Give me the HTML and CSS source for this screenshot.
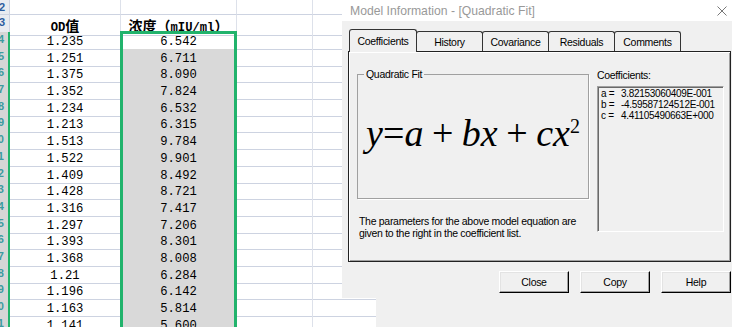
FILE: index.html
```html
<!DOCTYPE html>
<html lang="zh-CN">

<head>
    <meta charset="UTF-8">
    <title>Model Information - [Quadratic Fit]</title>
    <link rel="stylesheet" href="styles.css">
</head>

<body>
    <!-- spreadsheet behind the dialog -->
    <div class="sheet">
        <div class="row row-top"><div class="rh"><span>2</span></div><div class="c"></div><div class="c"></div><div class="c"></div><div class="c"></div></div>
        <div class="row row-head"><div class="rh"><span>3</span></div><div class="c hd">OD<span class="cjk">值</span></div><div class="c hd"><span class="cjk">浓度（</span>mIU/ml<span class="cjk">）</span></div><div class="c"></div><div class="c"></div></div>
        <div class="row sel-row"><div class="rh"><span>4</span></div><div class="c">1.235</div><div class="c">6.542</div><div class="c"></div><div class="c"></div></div>
        <div class="row sel-row"><div class="rh"><span>5</span></div><div class="c">1.251</div><div class="c picked">6.711</div><div class="c"></div><div class="c"></div></div>
        <div class="row sel-row"><div class="rh"><span>6</span></div><div class="c">1.375</div><div class="c picked">8.090</div><div class="c"></div><div class="c"></div></div>
        <div class="row sel-row"><div class="rh"><span>7</span></div><div class="c">1.352</div><div class="c picked">7.824</div><div class="c"></div><div class="c"></div></div>
        <div class="row sel-row"><div class="rh"><span>8</span></div><div class="c">1.234</div><div class="c picked">6.532</div><div class="c"></div><div class="c"></div></div>
        <div class="row sel-row"><div class="rh"><span>9</span></div><div class="c">1.213</div><div class="c picked">6.315</div><div class="c"></div><div class="c"></div></div>
        <div class="row sel-row"><div class="rh"><span>10</span></div><div class="c">1.513</div><div class="c picked">9.784</div><div class="c"></div><div class="c"></div></div>
        <div class="row sel-row"><div class="rh"><span>11</span></div><div class="c">1.522</div><div class="c picked">9.901</div><div class="c"></div><div class="c"></div></div>
        <div class="row sel-row"><div class="rh"><span>12</span></div><div class="c">1.409</div><div class="c picked">8.492</div><div class="c"></div><div class="c"></div></div>
        <div class="row sel-row"><div class="rh"><span>13</span></div><div class="c">1.428</div><div class="c picked">8.721</div><div class="c"></div><div class="c"></div></div>
        <div class="row sel-row"><div class="rh"><span>14</span></div><div class="c">1.316</div><div class="c picked">7.417</div><div class="c"></div><div class="c"></div></div>
        <div class="row sel-row"><div class="rh"><span>15</span></div><div class="c">1.297</div><div class="c picked">7.206</div><div class="c"></div><div class="c"></div></div>
        <div class="row sel-row"><div class="rh"><span>16</span></div><div class="c">1.393</div><div class="c picked">8.301</div><div class="c"></div><div class="c"></div></div>
        <div class="row sel-row"><div class="rh"><span>17</span></div><div class="c">1.368</div><div class="c picked">8.008</div><div class="c"></div><div class="c"></div></div>
        <div class="row sel-row"><div class="rh"><span>18</span></div><div class="c">1.21</div><div class="c picked">6.284</div><div class="c"></div><div class="c"></div></div>
        <div class="row sel-row"><div class="rh"><span>19</span></div><div class="c">1.196</div><div class="c picked">6.142</div><div class="c"></div><div class="c"></div></div>
        <div class="row sel-row"><div class="rh"><span>20</span></div><div class="c">1.163</div><div class="c picked">5.814</div><div class="c"></div><div class="c"></div></div>
        <div class="row sel-row"><div class="rh"><span>21</span></div><div class="c">1.141</div><div class="c picked">5.600</div><div class="c"></div><div class="c"></div></div>
    </div>
    <div class="selection"></div>

    <!-- model information dialog -->
    <div class="dialog">
        <div class="titlebar">
            <span>Model Information - [Quadratic Fit]</span>
            <svg class="close-x" viewBox="0 0 10 10" width="10" height="10"><path d="M0.5 0.5L9.5 9.5M9.5 0.5L0.5 9.5" stroke="#777" stroke-width="1" fill="none"/></svg>
        </div>
        <div class="dlg-body">
            <div class="tabs">
                <div class="tab on">Coefficients</div>
                <div class="tab">History</div>
                <div class="tab">Covariance</div>
                <div class="tab">Residuals</div>
                <div class="tab">Comments</div>
            </div>
            <div class="pane">
                <div class="fit">
                    <fieldset class="group">
                        <legend>Quadratic Fit</legend>
                        <div class="formula"><i>y</i>=<i>a</i> + <i>bx</i> + <i>cx</i><sup>2</sup></div>
                    </fieldset>
                    <p class="note">The parameters for the above model equation are<br>given to the right in the coefficient list.</p>
                </div>
                <div class="coefs">
                    <div class="coef-label">Coefficients:</div>
                    <div class="coef-box">
                        <div><span class="k">a =</span>3.82153060409E-001</div>
                        <div><span class="k">b =</span>-4.59587124512E-001</div>
                        <div><span class="k">c =</span>4.41105490663E+000</div>
                    </div>
                </div>
            </div>
            <div class="buttons">
                <button>Close</button>
                <button>Copy</button>
                <button>Help</button>
            </div>
        </div>
    </div>
    <div class="dialog-tail"></div>
</body>

</html>
```

FILE: styles.css
```css
* {
    box-sizing: border-box;
}

body {
    margin: 0;
    width: 732px;
    height: 327px;
    overflow: hidden;
    position: relative;
    background: #fff;
    font-family: "Liberation Sans", Arial, sans-serif;
}

/* spreadsheet */

.row {
    display: grid;
    grid-template-columns: 10px 111px 116px 76px 1fr;
    height: 16.7px;
}

.row-top {
    height: 15px;
}

.row-head {
    height: 17px;
}

.c {
    border-right: 1px solid #dde1ea;
    border-bottom: 1px solid #cdd3e1;
    font-family: "Liberation Mono", monospace;
    font-size: 12.2px;
    line-height: 14px;
    padding-top: 3px;
    text-align: center;
    white-space: nowrap;
}

.c.picked {
    background: #d9d9d9;
    border-bottom-color: #b9bfcc;
}

.hd {
    font-weight: bold;
}

.cjk {
    font-family: "Noto Sans CJK SC", sans-serif;
    font-size: 14px;
    line-height: 14px;
}

.rh {
    display: flex;
    justify-content: flex-end;
    overflow: hidden;
    background: #e9ebf0;
    border-right: 1px solid #cdd3e1;
    border-bottom: 1px solid #cdd3e1;
    font-size: 11px;
    line-height: 15px;
    font-weight: bold;
    color: #2b5c9e;
}

.rh span {
    margin-right: 4px;
}

.sel-row .rh {
    background: #d6d6d6;
    border-right: 2px solid #21b36c;
    color: #3c9aa0;
}

.selection {
    position: absolute;
    left: 120px;
    top: 31px;
    width: 117px;
    height: 310px;
    border: 3px solid #21b36c;
}

/* dialog */

.dialog {
    position: absolute;
    left: 342px;
    top: 0;
    width: 390px;
    height: 298px;
    background: #f0f0f0;
    font-size: 10.5px;
    letter-spacing: -0.3px;
    color: #000;
}

.titlebar {
    height: 21px;
    background: #fff;
    display: flex;
    align-items: center;
    justify-content: space-between;
    padding: 0 5px 0 8px;
    font-size: 12.2px;
    letter-spacing: 0;
    color: #999;
}

.dlg-body {
    padding: 8px 1px 0 6px;
}

.tabs {
    display: flex;
    align-items: flex-end;
    height: 22px;
    padding-left: 1px;
}

.tab {
    width: 67px;
    height: 20px;
    margin-left: -1px;
    border: 1px solid #333;
    border-bottom: none;
    border-radius: 3px 3px 0 0;
    display: flex;
    align-items: center;
    justify-content: center;
}

.tab.on {
    width: 68px;
    height: 23px;
    margin-left: 0;
    margin-bottom: -1px;
    position: relative;
    z-index: 1;
    background: #f0f0f0;
}

.pane {
    height: 211px;
    border: 1px solid #222;
    box-shadow: inset 1px 1px #fff, inset -1px -1px #a0a0a0;
    padding: 0 6px 0 8px;
    display: flex;
    gap: 8px;
}

.fit {
    width: 232px;
}

.group {
    margin: 16px 0 0;
    padding: 0;
    height: 131px;
    border: 1px solid #a0a0a0;
    box-shadow: 1px 1px 0 #fff;
}

.group legend {
    margin-left: 6px;
    padding: 0 2px;
    line-height: 12px;
}

.formula {
    font-family: "Liberation Serif", serif;
    font-size: 38px;
    line-height: 38px;
    letter-spacing: 0;
    word-spacing: -1px;
    text-align: center;
    padding-top: 34px;
}

.formula sup {
    font-size: 20px;
    line-height: 0;
    vertical-align: 13px;
}

.note {
    margin: 16px 0 0 2px;
    line-height: 12px;
}

.coefs {
    width: 127px;
}

.coef-label {
    margin-top: 17px;
    line-height: 12px;
}

.coef-box {
    margin-top: 5px;
    height: 146px;
    border: 1px solid;
    border-color: #a0a0a0 #fff #fff #a0a0a0;
    box-shadow: inset 1px 1px #696969;
    padding: 1px 3px;
    font-size: 10px;
    line-height: 11.2px;
}

.coef-box .k {
    display: inline-block;
    width: 20px;
}

.buttons {
    display: flex;
    justify-content: flex-end;
    gap: 11px;
    margin-top: 9px;
}

button {
    width: 70px;
    height: 22px;
    padding: 0;
    background: #f0f0f0;
    border: 1px solid;
    border-color: #fff #000 #000 #fff;
    box-shadow: inset -1px -1px #a0a0a0, inset 1px 1px #e3e3e3;
    font: inherit;
    letter-spacing: inherit;
    color: #000;
}

.dialog-tail {
    position: absolute;
    left: 376px;
    top: 298px;
    width: 356px;
    height: 29px;
    background: #f0f0f0;
}
```
